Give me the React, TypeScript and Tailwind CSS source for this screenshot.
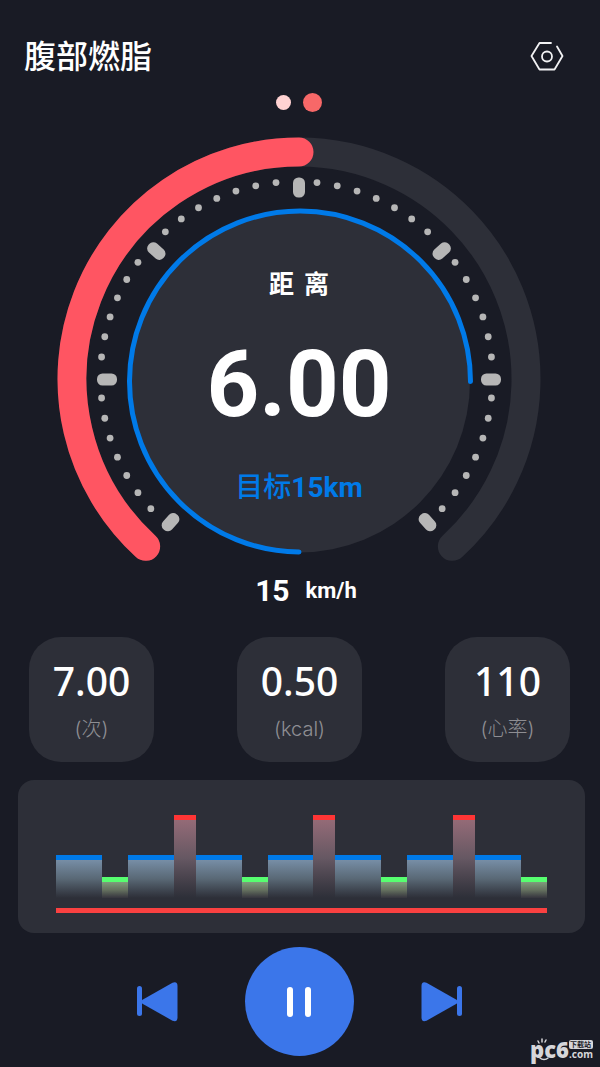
import React from 'react';

type Level = 'warm' | 'easy' | 'hard';

const CX = 299;
const CY = 379;

const stats = [
  { value: '7.00', label: '(次)' },
  { value: '0.50', label: '(kcal)' },
  { value: '110', label: '(心率)' },
];

const intervals: Level[] = [
  'warm', 'easy', 'warm', 'hard',
  'warm', 'easy', 'warm', 'hard',
  'warm', 'easy', 'warm', 'hard',
  'warm', 'easy',
];

const levelStyles: Record<Level, string> = {
  warm: 'grow-[46] h-[43px] border-[#007ae8] from-[#778ea6] via-[#596875] to-[#2d2f38]',
  easy: 'grow-[26] h-[21px] border-[#57ff70] from-[#7f9c7c] via-[#65715f] to-[#35343d]',
  hard: 'grow-[22] h-[83px] border-[#ff3535] from-[#946b77] via-[#655762] to-[#2d2f38]',
};

// angle in degrees, measured clockwise from the top
const point = (angle: number, r: number, cx = CX, cy = CY) => {
  const a = (angle * Math.PI) / 180;
  return { x: cx + r * Math.sin(a), y: cy - r * Math.cos(a) };
};

const MAJOR = [0, 48, 90, 138];

const Ticks = () => {
  const items = [];
  for (let a = -138; a <= 138; a += 6) {
    if (MAJOR.includes(Math.abs(a))) {
      const p = point(a, 192, CX, 379.5);
      items.push(
        <rect key={a} x={p.x - 6} y={p.y - 10} width="12" height="20" rx="5.5" transform={`rotate(${a} ${p.x} ${p.y})`} />
      );
    } else {
      const p = point(a, 196, 296.5, 377.5);
      items.push(<circle key={a} cx={p.x} cy={p.y} r="3.4" />);
    }
  }
  return <g fill="#b6b6b6">{items}</g>;
};

const Gauge = () => {
  const start = point(-137.5, 227);
  const end = point(137.5, 227);
  const top = point(0, 227);

  return (
    <div className="relative w-full max-w-[484px]">
      <svg viewBox="57 137 484 426" className="block w-full" fill="none" aria-hidden="true">
        <path d={`M${start.x} ${start.y}A227 227 0 1 1 ${end.x} ${end.y}`} stroke="#2d2f38" strokeWidth="29" strokeLinecap="round" />
        <path d={`M${start.x} ${start.y}A227 227 0 0 1 ${top.x} ${top.y}`} stroke="#ff5562" strokeWidth="29" strokeLinecap="round" />
        <Ticks />
        <circle cx="299" cy="381.5" r="171" fill="#2d2f38" />
        <path d="M299 552A170.5 170.5 0 1 1 470.5 381.5" stroke="#007ae8" strokeWidth="5" strokeLinecap="round" />
      </svg>
      <div className="absolute inset-0 flex flex-col items-center pt-[130px]">
        <h2 className="flex gap-2.5 text-[25px] leading-9 font-bold">
          <span>距</span> <span>离</span>
        </h2>
        <p className="mt-8 text-[92px] leading-[100px] font-bold">6.00</p>
        <p className="mt-[35px] text-[28px] leading-9 font-medium text-[#007ae8]">
          目标<span className="font-bold">15km</span>
        </p>
      </div>
    </div>
  );
};

const Watermark = () => (
  <div className="absolute right-[7px] bottom-1.5 flex items-center text-[#d6d6da] font-['Noto_Sans','Noto_Sans_CJK_SC',sans-serif]">
    <span className="relative text-[22px] leading-6 font-black">
      pc6
      <svg viewBox="0 0 24 24" className="absolute left-1 top-0 w-6" fill="none" stroke="#d6d6da" strokeWidth="1.5" strokeLinecap="round" aria-hidden="true">
        <path d="M4 4l1 2M8 2v3M12 3l-1 2M6 21c2 2 6 2 8 0" />
      </svg>
    </span>
    <span className="flex flex-col">
      <span className="rounded-xs bg-[#d6d6da] px-px text-[7px] leading-[9px] font-bold text-[#191b25]">下载站</span>
      <span className="text-[10px] leading-[10px] font-bold">.com</span>
    </span>
  </div>
);

const App: React.FC = () => {
  return (
    <main className="relative flex min-h-screen flex-col items-center bg-[#191b25] pr-0.5 pb-2.5 text-white font-[Roboto,'Noto_Sans_CJK_SC',sans-serif]">
      <header className="flex h-8 w-full items-center justify-between mt-[41px] pl-6 pr-[34px]">
        <h1 className="text-[32px] leading-8 font-medium">腹部燃脂</h1>
        <button type="button" aria-label="设置">
          <svg width="34" height="30" viewBox="0 0 34 30" fill="none" stroke="#f1f1f3" strokeWidth="1.8" strokeLinecap="round" strokeLinejoin="round">
            <path d="M21 1H9.500L1.500 14l8 13.500h15L32.500 14 27 4.500" />
            <circle cx="17" cy="14.5" r="5" />
          </svg>
        </button>
      </header>

      {/* Page indicator */}
      <div className="mt-5 flex h-[19px] items-center gap-3">
        <span className="size-[15px] rounded-full bg-[#ffd2d2]" />
        <span className="size-[19px] rounded-full bg-[#f76868]" />
      </div>

      <section className="mt-[25px] flex w-full flex-col items-center">
        <Gauge />
        <p className="mt-3 flex items-center gap-4 pl-3.5 leading-8">
          <span className="text-[30px] font-bold">15</span>
          <span className="text-[22px] font-bold">km/h</span>
        </p>
      </section>

      <section className="mt-[30px] flex w-full justify-between pl-[29px] pr-7">
        {stats.map((s) => (
          <div key={s.label} className="flex h-[125px] w-[125px] flex-col items-center rounded-[32px] bg-[#2d2f38] pt-5 font-['Noto_Sans','Noto_Sans_CJK_SC',sans-serif]">
            <span className="text-[39px] leading-12 font-medium">{s.value}</span>
            <span className="mt-3 text-[20px] leading-6 font-light text-[#8e8e93] font-[Inter,'Noto_Sans_CJK_SC',sans-serif]">{s.label}</span>
          </div>
        ))}
      </section>

      <section className="mt-[18px] w-full pl-[18px] pr-[13px]">
        <div className="h-[153px] rounded-2xl bg-[#2d2f38] px-[38px] pt-[35px]">
          <div className="flex h-[83px] items-end">
            {intervals.map((level, i) => (
              <div key={i} className={`basis-0 border-t-5 bg-linear-to-b ${levelStyles[level]}`} />
            ))}
          </div>
          <div className="mt-2.5 h-[5px] bg-[#fa4141]" />
        </div>
      </section>

      <nav className="mt-[14px] flex items-center justify-center gap-[67px] text-[#3b76ea]">
        <button type="button" aria-label="上一个">
          <svg width="41" height="40" viewBox="0 0 41 40" fill="currentColor">
            <rect x="0" y="4" width="5" height="30" rx="2.500" />
            <path d="M5.500 17.700 35.500 .8Q40.500 -1 40.500 4V35.500Q40.500 40.500 35.500 38.700L5.500 21.800Q3 19.800 5.500 17.700Z" />
          </svg>
        </button>
        <button type="button" aria-label="暂停" className="flex size-[109px] items-center justify-center gap-3 rounded-full bg-[#3b76ea]">
          <span className="h-[30px] w-1.5 rounded-full bg-white" />
          <span className="h-[30px] w-1.5 rounded-full bg-white" />
        </button>
        <button type="button" aria-label="下一个">
          <svg width="41" height="40" viewBox="0 0 41 40" fill="currentColor">
            <rect x="36" y="4" width="5" height="30" rx="2.500" />
            <path d="M35.500 17.700 5.500 .8Q.5 -1 .5 4V35.500Q.5 40.500 5.500 38.700L35.500 21.800Q38 19.800 35.500 17.700Z" />
          </svg>
        </button>
      </nav>

      <Watermark />
    </main>
  );
};

export default App;
